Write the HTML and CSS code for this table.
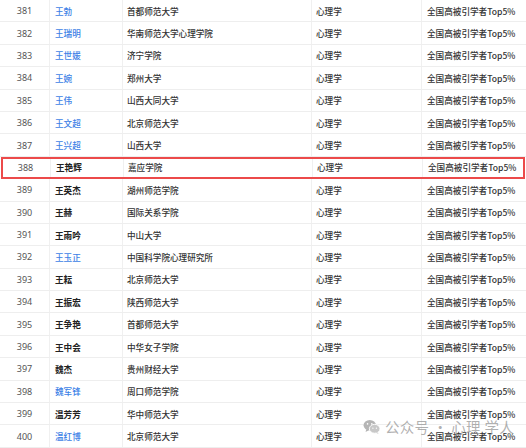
FILE: index.html
```
<!DOCTYPE html>
<html lang="zh">
<head>
<meta charset="utf-8">
<link rel="stylesheet" href="styles.css">
</head>
<body>
<div class="table">
  <div class="row"><div class="c num">381</div><div class="c name link">王勃</div><div class="c">首都师范大学</div><div class="c">心理学</div><div class="c">全国高被引学者Top5%</div></div>
  <div class="row"><div class="c num">382</div><div class="c name link">王瑞明</div><div class="c">华南师范大学心理学院</div><div class="c">心理学</div><div class="c">全国高被引学者Top5%</div></div>
  <div class="row"><div class="c num">383</div><div class="c name link">王世媛</div><div class="c">济宁学院</div><div class="c">心理学</div><div class="c">全国高被引学者Top5%</div></div>
  <div class="row"><div class="c num">384</div><div class="c name link">王婉</div><div class="c">郑州大学</div><div class="c">心理学</div><div class="c">全国高被引学者Top5%</div></div>
  <div class="row"><div class="c num">385</div><div class="c name link">王伟</div><div class="c">山西大同大学</div><div class="c">心理学</div><div class="c">全国高被引学者Top5%</div></div>
  <div class="row"><div class="c num">386</div><div class="c name link">王文超</div><div class="c">北京师范大学</div><div class="c">心理学</div><div class="c">全国高被引学者Top5%</div></div>
  <div class="row"><div class="c num">387</div><div class="c name link">王兴超</div><div class="c">山西大学</div><div class="c">心理学</div><div class="c">全国高被引学者Top5%</div></div>
  <div class="row hl"><div class="c num">388</div><div class="c name">王艳辉</div><div class="c">嘉应学院</div><div class="c">心理学</div><div class="c">全国高被引学者Top5%</div></div>
  <div class="row"><div class="c num">389</div><div class="c name">王英杰</div><div class="c">湖州师范学院</div><div class="c">心理学</div><div class="c">全国高被引学者Top5%</div></div>
  <div class="row"><div class="c num">390</div><div class="c name">王赫</div><div class="c">国际关系学院</div><div class="c">心理学</div><div class="c">全国高被引学者Top5%</div></div>
  <div class="row"><div class="c num">391</div><div class="c name">王雨吟</div><div class="c">中山大学</div><div class="c">心理学</div><div class="c">全国高被引学者Top5%</div></div>
  <div class="row"><div class="c num">392</div><div class="c name link">王玉正</div><div class="c">中国科学院心理研究所</div><div class="c">心理学</div><div class="c">全国高被引学者Top5%</div></div>
  <div class="row"><div class="c num">393</div><div class="c name">王耘</div><div class="c">北京师范大学</div><div class="c">心理学</div><div class="c">全国高被引学者Top5%</div></div>
  <div class="row"><div class="c num">394</div><div class="c name">王振宏</div><div class="c">陕西师范大学</div><div class="c">心理学</div><div class="c">全国高被引学者Top5%</div></div>
  <div class="row"><div class="c num">395</div><div class="c name">王争艳</div><div class="c">首都师范大学</div><div class="c">心理学</div><div class="c">全国高被引学者Top5%</div></div>
  <div class="row"><div class="c num">396</div><div class="c name">王中会</div><div class="c">中华女子学院</div><div class="c">心理学</div><div class="c">全国高被引学者Top5%</div></div>
  <div class="row"><div class="c num">397</div><div class="c name">魏杰</div><div class="c">贵州财经大学</div><div class="c">心理学</div><div class="c">全国高被引学者Top5%</div></div>
  <div class="row"><div class="c num">398</div><div class="c name link">魏军锋</div><div class="c">周口师范学院</div><div class="c">心理学</div><div class="c">全国高被引学者Top5%</div></div>
  <div class="row"><div class="c num">399</div><div class="c name">温芳芳</div><div class="c">华中师范大学</div><div class="c">心理学</div><div class="c">全国高被引学者Top5%</div></div>
  <div class="row"><div class="c num">400</div><div class="c name link">温红博</div><div class="c">北京师范大学</div><div class="c">心理学</div><div class="c">全国高被引学者Top5%</div></div>
</div>
<div class="watermark">
  <svg class="wx" viewBox="0 0 20 18" width="18" height="16">
    <ellipse cx="7.5" cy="7" rx="7" ry="6" fill="#b5b5b5"/>
    <path d="M3.5 11.5 L2.8 14.5 L6.5 12.6 Z" fill="#b5b5b5"/>
    <ellipse cx="13" cy="11" rx="6" ry="5" fill="#c8c8c8" stroke="#fff" stroke-width="1"/>
    <path d="M16 14.8 L17.5 17 L14.5 15.6 Z" fill="#c8c8c8"/>
    <circle cx="5" cy="5.5" r="0.9" fill="#fff"/>
    <circle cx="9.8" cy="5.5" r="0.9" fill="#fff"/>
    <circle cx="11" cy="10.3" r="0.75" fill="#fff"/>
    <circle cx="15" cy="10.3" r="0.75" fill="#fff"/>
  </svg>
  <span class="wm-text">公众号 · 心理 学人</span>
</div>
</body>
</html>
```
FILE: styles.css
```
html, body {
  margin: 0;
  padding: 0;
  background: #ffffff;
}
body {
  width: 526px;
  height: 448px;
  overflow: hidden;
  position: relative;
  font-family: "Noto Sans CJK SC", "Noto Sans", sans-serif;
  font-size: 8.6px;
  color: #333333;
}
.table {
  display: flex;
  flex-direction: column;
}
.row {
  display: grid;
  grid-template-columns: 50px 73px 189px 110px 1fr;
  height: 22.4px;
  box-sizing: border-box;
  border-bottom: 1px solid #eeeeee;
  position: relative;
}
.c {
  display: flex;
  align-items: center;
  padding-left: 4px;
  border-right: 1px solid #f0f0f0;
  font-weight: 500;
  white-space: nowrap;
}
.c:last-child {
  border-right: none;
  padding-left: 5px;
}
.num {
  justify-content: center;
  padding-left: 0;
  color: #555555;
  font-family: "Noto Sans", sans-serif;
  font-weight: 400;
  font-size: 9px;
}
.name {
  padding-left: 5px;
  font-weight: 700;
  color: #222222;
}
.name.link {
  color: #3d7fe6;
  font-weight: 500;
}
.hl {
  outline: 2px solid #ec4a4a;
  outline-offset: -2px;
  margin: 0 1px;
}
.watermark {
  position: absolute;
  left: 363px;
  top: 416px;
  display: flex;
  align-items: center;
  gap: 4px;
  color: rgba(150, 150, 150, 0.75);
  font-size: 14.5px;
  font-family: "Noto Sans CJK SC", sans-serif;
  letter-spacing: 0.3px;
}
.wx {
  display: block;
}
```
